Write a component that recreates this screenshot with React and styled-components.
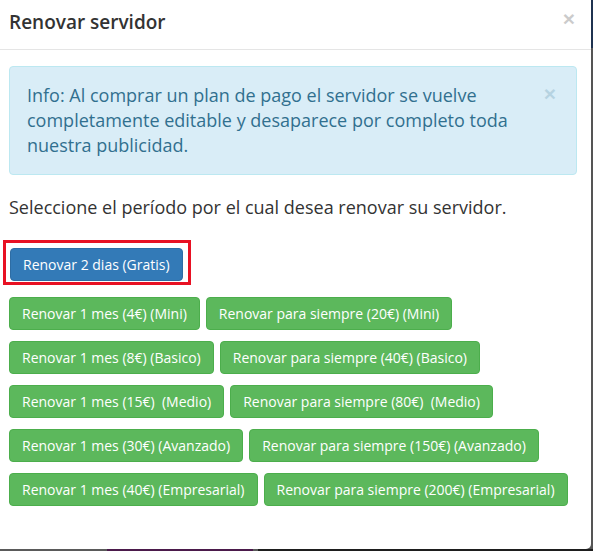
import React from 'react';
import styled, { createGlobalStyle } from 'styled-components';

const GlobalStyle = createGlobalStyle`
  html, body {
    margin: 0;
    padding: 0;
    width: 593px;
    height: 551px;
    overflow: hidden;
  }
  body {
    font-family: "Open Sans", "Liberation Sans", sans-serif;
    background:
      linear-gradient(#1f3350, #1f3350) 591px 0 / 2px 48px no-repeat,
      linear-gradient(to right, #5a5a5a 0 107px, #4b1a4b 107px 253px, #5a5a5a 253px 258px, #1e1e1e 258px) 0 549px / 100% 2px no-repeat,
      #555;
  }
`;

const Modal = styled.div`
  width: 591px;
  height: 549px;
  background: #fff;
  border-bottom-right-radius: 5px;
  box-sizing: border-box;
  display: flex;
  flex-direction: column;
`;

const Header = styled.div`
  height: 50px;
  box-sizing: border-box;
  border-bottom: 1px solid #e5e5e5;
  display: flex;
  align-items: center;
  justify-content: space-between;
  padding: 0 16px 6px 9px;
`;

const Title = styled.h4`
  margin: 0;
  font-size: 19px;
  font-weight: 600;
  font-stretch: 95%;
  color: #333;
`;

const Close = styled.span`
  font-size: 21px;
  font-weight: 700;
  line-height: 1;
  margin-top: ${p => p.$info ? '0' : '-6px'};
  color: ${p => p.$info ? '#31708f' : '#000'};
  opacity: 0.2;
  font-family: "Liberation Sans", sans-serif;
  cursor: pointer;
`;

const Body = styled.div`
  padding: 16px 14px 0 9px;
`;

const Alert = styled.div`
  background: #d9edf7;
  border: 1px solid #bce8f1;
  border-radius: 4px;
  color: #31708f;
  padding: 16px 20px 16px 17px;
  display: flex;
  justify-content: space-between;
  align-items: flex-start;
  font-size: 18px;
  line-height: 25px;
`;

const AlertText = styled.div`
  width: 510px;
`;

const Lead = styled.p`
  margin: 20px 0 0;
  font-size: 18px;
  line-height: 25px;
  color: #333;
`;

const Highlight = styled.div`
  display: inline-block;
  margin: 20px 0 0 -6px;
  border: 3px solid #e81123;
  padding: 5px 5px 1px 4px;
`;

const Buttons = styled.div`
  margin-top: 12px;
  display: flex;
  flex-direction: column;
  gap: 11px;
`;

const Row = styled.div`
  display: flex;
  gap: 6px;
`;

const Btn = styled.button`
  font-family: "Open Sans", "Liberation Sans", sans-serif;
  font-size: 14px;
  line-height: 20px;
  height: 33px;
  padding: 0 12px;
  border-radius: 4px;
  color: #fff;
  white-space: pre;
  cursor: pointer;
  background: ${p => p.$kind === 'primary' ? '#337ab7' : '#5cb85c'};
  border: 1px solid ${p => p.$kind === 'primary' ? '#2e6da4' : '#4cae4c'};
`;

const plans = [
  ['Renovar 1 mes (4€) (Mini)', 'Renovar para siempre (20€) (Mini)'],
  ['Renovar 1 mes (8€) (Basico)', 'Renovar para siempre (40€) (Basico)'],
  ['Renovar 1 mes (15€)  (Medio)', 'Renovar para siempre (80€)  (Medio)'],
  ['Renovar 1 mes (30€) (Avanzado)', 'Renovar para siempre (150€) (Avanzado)'],
  ['Renovar 1 mes (40€) (Empresarial)', 'Renovar para siempre (200€) (Empresarial)'],
];

export default function App() {
  return (
    <>
      <GlobalStyle />
      <Modal>
        <Header>
          <Title>Renovar servidor</Title>
          <Close>×</Close>
        </Header>
        <Body>
          <Alert>
            <AlertText>
              Info: Al comprar un plan de pago el servidor se vuelve completamente editable y desaparece por completo toda nuestra publicidad.
            </AlertText>
            <Close $info>×</Close>
          </Alert>
          <Lead>Seleccione el período por el cual desea renovar su servidor.</Lead>
          <Highlight>
            <Btn $kind="primary">Renovar 2 dias (Gratis)</Btn>
          </Highlight>
          <Buttons>
            {plans.map((row, i) => (
              <Row key={i}>
                {row.map(label => <Btn key={label}>{label}</Btn>)}
              </Row>
            ))}
          </Buttons>
        </Body>
      </Modal>
    </>
  );
}
